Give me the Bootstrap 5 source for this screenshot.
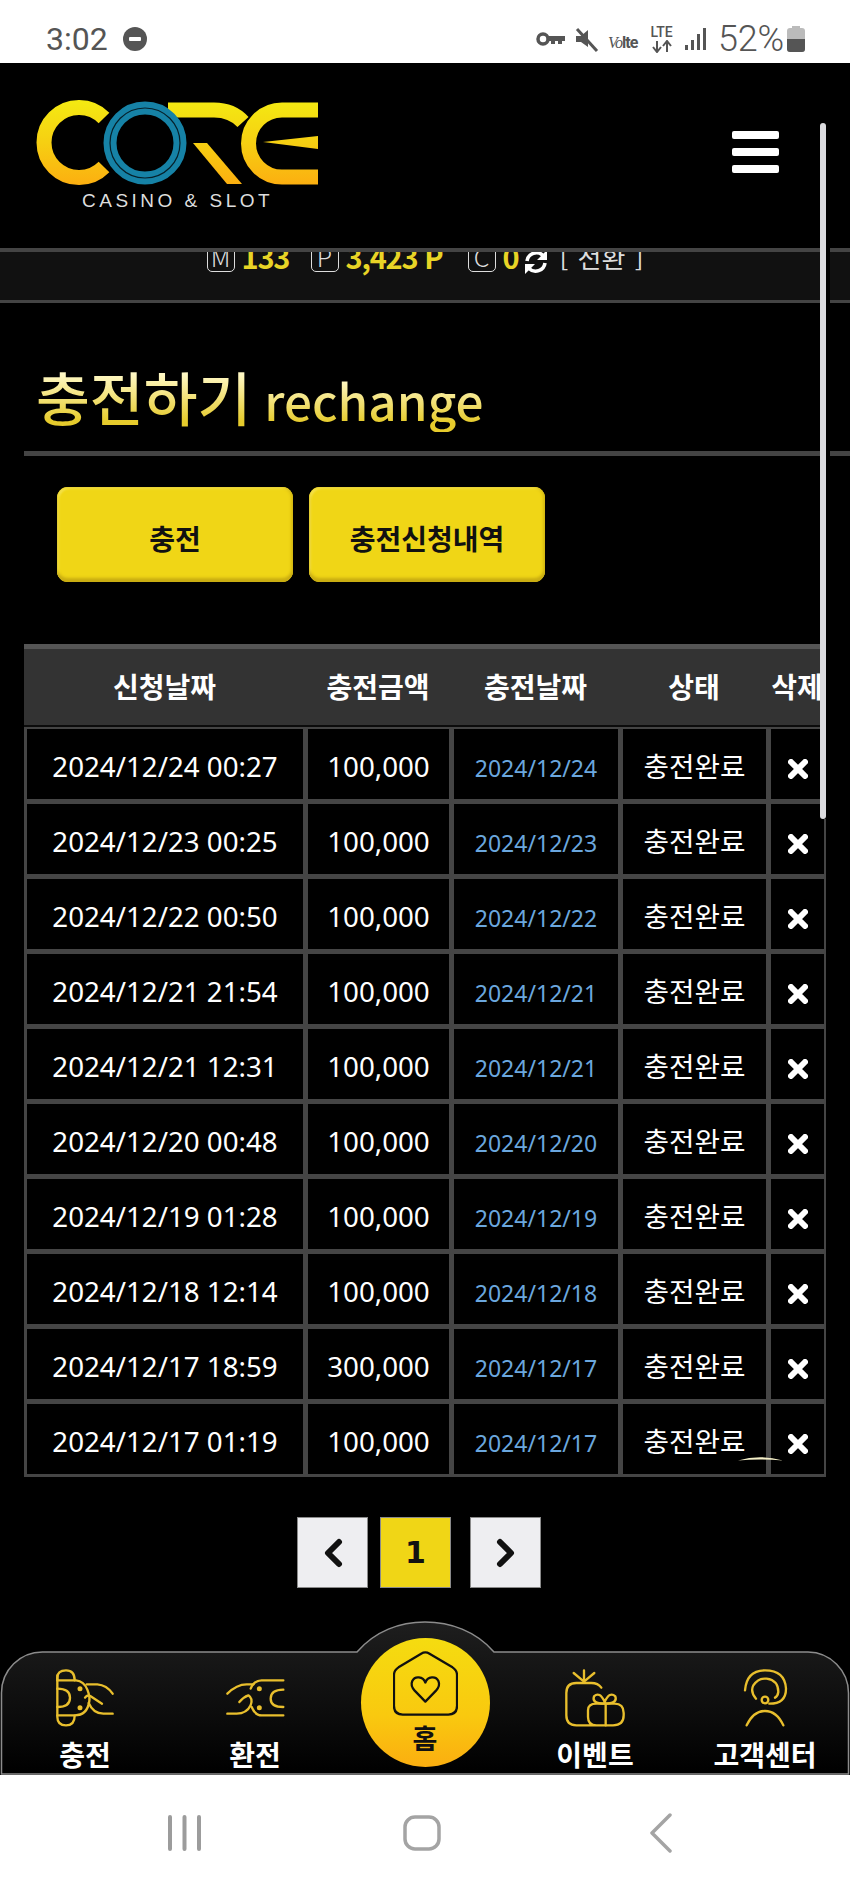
<!DOCTYPE html>
<html lang="ko">
<head>
  <meta charset="UTF-8" />
  <meta name="viewport" content="width=device-width, initial-scale=1" />
  <title>충전하기 - CORE</title>
  <link href="https://cdn.jsdelivr.net/npm/bootstrap@5.3.0/dist/css/bootstrap.min.css" rel="stylesheet" />
  <style>
    body { width: 850px; height: 1889px; margin: 0; overflow: hidden; background: #000; font-family: "Noto Sans CJK KR", "Noto Sans", sans-serif; }

    /* phone chrome */
    .phone-status { height: 63px; background: #fff; color: #555; font-family: Roboto, sans-serif; padding: 20px 45px 0 46px; }
    .phone-time { font-size: 32px; line-height: 38px; width: 77px; }
    .phone-pct { font-size: 36px; line-height: 38px; font-weight: 300; letter-spacing: -.2px; }
    .ic-dnd { margin-top: 7px; }
    .ic-key { margin-top: 10px; }
    .ic-mute { margin: 8px 0 0 8px; }
    .volte { font-size: 16px; font-weight: 700; width: 32px; letter-spacing: -1px; margin: 11px 0 0 8px; }
    .volte i { font-family: "Liberation Serif", serif; font-weight: 400; }
    .lte-stack { width: 27px; font-size: 14px; line-height: 13px; font-weight: 500; text-align: center; margin: 6px 0 0 8px; }
    .ic-signal { margin: 7px 11px 0 10px; }
    .ic-batt { margin: 6px 0 0 3px; }
    .phone-nav { height: 114px; background: #fff; padding: 40px 0 0 168px; }
    .nav-sq { margin-left: 202px; }
    .nav-back { margin: -2px 0 0 209px; }

    /* app */
    .app-screen { height: 1712px; position: relative; overflow: hidden; background: #000; }
    .site-head { height: 185px; padding: 37px 71px 0 35px; }
    .burger { width: 47px; margin-top: 31px; }
    .burger span { display: block; height: 8px; margin-bottom: 9px; background: #fff; border-radius: 2px; }
    .logo-sub { font-family: "Liberation Sans", sans-serif; font-size: 19px; letter-spacing: 3.5px; fill: #ddd; }

    .info-strip { height: 55px; background: #111; border-top: 4px solid #444; border-bottom: 3px solid #444; overflow: hidden; color: #ddd; }
    .info-line { margin-top: -8px; height: 32px; }
    .pt-box { width: 28px; height: 28px; border: 1.5px solid #ddd; border-radius: 5px; font-size: 25px; font-weight: 300; line-height: 22px; text-align: center; margin-right: 7px; flex: none; overflow: hidden; }
    .pt-num { font-size: 29px; line-height: 24px; font-weight: 700; color: #e8d426; white-space: nowrap; letter-spacing: -1.2px; }
    .w-m { width: 69px; }
    .w-p { width: 122px; }
    .w-c { width: 20px; }
    .ic-refresh { margin: 5px 11px 0 0; }
    .swap-text { font-size: 26px; line-height: 26px; white-space: nowrap; word-spacing: 2px; }

    .page-title { margin: 0 0 0 24px; padding: 0 0 19px 12px; height: 153px; border-bottom: 5px solid #444; display: flex; align-items: flex-end; }
    .page-title span { background: linear-gradient(#fff8c4 20%, #e6cb2c 85%); -webkit-background-clip: text; background-clip: text; color: transparent; }
    .title-ko { font-size: 58.5px; line-height: 72px; font-weight: 500; }
    .title-en { font-size: 49.5px; line-height: 64px; font-weight: 500; margin-left: 13px; }

    .tab-row { margin: 31px 0 62px 57px; gap: 16px; }
    .btn-gold { width: 236px; height: 95px; padding-top: 12px; background: #f0d616; color: #111; border: 0; border-radius: 11px; font-size: 28px; font-weight: 700; box-shadow: inset 0 -4px 3px #c9ad12, inset -2px 0 3px #d9bd14, inset 2px 2px 2px #f5e24a; }

    .hist-wrap { margin-left: 24px; width: 802px; }
    .table.hist-tbl { table-layout: fixed; width: 802px; border-collapse: separate; border-spacing: 0; margin: 0; color: #fff; --bs-table-bg: #000; --bs-table-color: #fff; font-size: 28px; }
    .table.hist-tbl col:nth-child(1) { width: 281px; }
    .table.hist-tbl col:nth-child(2) { width: 146px; }
    .table.hist-tbl col:nth-child(3) { width: 169px; }
    .table.hist-tbl col:nth-child(4) { width: 148px; }
    .table.hist-tbl col:nth-child(5) { width: 58px; }
    .table.hist-tbl > thead > tr > th { height: 83px; padding: 0 0 3px; background: #333; color: #fff; font-weight: 700; text-align: center; vertical-align: middle; border-width: 5px 0 2px; border-style: solid; border-color: #555 #333 #0c0c0c; white-space: nowrap; overflow: hidden; }
    .table.hist-tbl > tbody > tr > td { height: 75px; padding: 5px 0 0; background: #000; color: #fff; font-family: "Noto Sans", "Noto Sans CJK KR", sans-serif; font-size: 27.7px; text-align: center; vertical-align: middle; border-style: solid; border-color: #454545; border-width: 2px 2px 3px 3px; white-space: nowrap; }
    .date-done { color: #6ba7de; font-size: 23px; position: relative; top: 0; }
    .del-x { display: block; margin: 5px auto 0; }

    .pager { --bs-pagination-border-radius: 0; margin: 40px 0 0 297px; gap: 12px; }
    .pager .page-item .page-link { width: 71px; height: 71px; padding: 0; display: flex; align-items: center; justify-content: center; background: #eeeef1; border: 1px solid #8a8a8a; border-radius: 0; color: #111; margin: 0; }
    .pager .page-item.active .page-link { background: #f0d616; color: #111; font-family: "DejaVu Sans", sans-serif; font-weight: 700; font-size: 30px; }
    .pager .next-gap { margin-left: 7px; }

    .scroll-thumb { position: absolute; left: 820px; top: 60px; width: 10px; height: 696px; background: #000; }
    .scroll-thumb::before { content: ""; display: block; width: 6px; height: 100%; background: #dcdcdf; border-radius: 3px; }
    .glint { position: absolute; left: 738px; top: 1393px; }

    .tabbar { position: relative; height: 154px; margin-top: auto; padding-top: 46px; }
    .tabbar-bg { position: absolute; left: 0; top: 0; }
    .tab-item { position: relative; flex: 0 0 170px; width: 170px; text-align: center; color: #fff; font-size: 28px; font-weight: 700; line-height: 30px; }
    .tab-item svg { display: block; margin: 0 auto 10px; }
    .ico-line { fill: none; stroke: #e9bf2d; stroke-width: 7; stroke-linecap: round; stroke-linejoin: round; }
    .home-btn { width: 129px; height: 129px; margin: -29px auto 0; border-radius: 50%; background: linear-gradient(#f5dc10, #f9c90f 60%, #fbae10); color: #111; padding-top: 12px; line-height: 30px; font-size: 27px; }
    .tab-item .home-btn svg { margin-bottom: 6px; }
  </style>
</head>
<body>
  <svg width="0" height="0" class="position-absolute">
    <symbol id="xmark" viewBox="0 0 20 20"><path d="M3 3L17 17M17 3L3 17" stroke="#fff" stroke-width="6" stroke-linecap="round"/></symbol>
  </svg>

  <div class="phone-status d-flex align-items-start">
    <div class="phone-time">3:02</div>
    <svg class="ic-dnd" width="24" height="24" viewBox="0 0 24 24"><circle cx="12" cy="12" r="12" fill="#555"/><rect x="6" y="10" width="12" height="4" rx="1" fill="#fff"/></svg>
    <div class="ms-auto d-flex align-items-start">
      <svg class="ic-key" width="30" height="18" viewBox="0 0 30 18"><circle cx="7" cy="9" r="5" fill="none" stroke="#555" stroke-width="3.5"/><path d="M11 6H29V11H26V14H22V11H19V14H15V11H11Z" fill="#555"/></svg>
      <svg class="ic-mute" width="26" height="24" viewBox="0 0 26 24"><path d="M2 8H7L14 2V19L7 14H2Z" fill="#555"/><path d="M3 1L23 23" stroke="#555" stroke-width="3"/></svg>
      <div class="volte"><i>Vo</i>lte</div>
      <div class="lte-stack">LTE<br><svg width="26" height="13" viewBox="0 0 26 13"><path d="M8 1V11M4 7L8 12L12 7M18 12V2M14 6L18 1L22 6" fill="none" stroke="#555" stroke-width="2"/></svg></div>
      <svg class="ic-signal" width="22" height="24" viewBox="0 0 22 24"><rect x="0" y="18" width="3" height="5" fill="#555"/><rect x="6" y="13" width="3" height="10" fill="#555"/><rect x="12" y="7" width="3" height="16" fill="#555"/><rect x="18" y="1" width="3" height="22" fill="#555"/></svg>
      <div class="phone-pct">52%</div>
      <svg class="ic-batt" width="18" height="26" viewBox="0 0 18 26"><rect x="5" y="0" width="8" height="3" fill="#bbb"/><rect x="0" y="2" width="18" height="24" rx="3" fill="#bbb"/><path d="M0 13H18V23a3 3 0 0 1-3 3H3a3 3 0 0 1-3-3Z" fill="#555"/></svg>
    </div>
  </div>

  <div class="app-screen d-flex flex-column">
    <header class="site-head d-flex justify-content-between align-items-start flex-shrink-0">
      <svg width="285" height="110" viewBox="35 100 285 110" role="img" aria-label="CORE CASINO &amp; SLOT">
        <defs>
          <linearGradient id="logoGold" gradientUnits="userSpaceOnUse" x1="0" y1="100" x2="0" y2="186">
            <stop offset="0" stop-color="#f4ea12"/><stop offset=".5" stop-color="#f6cf12"/><stop offset="1" stop-color="#fcae10"/>
          </linearGradient>
        </defs>
        <g fill="none" stroke="url(#logoGold)" stroke-width="15">
          <path d="M104 118A35 35 0 1 0 104 167"/>
          <path d="M168 110H214Q232 110 243 122"/>
          <path d="M318 110H282A33 33 0 0 0 282 177H318"/>
        </g>
        <polygon points="193,143 207,143 242,184 227,184" fill="url(#logoGold)"/>
        <polygon points="263,142 318,136 318,149" fill="url(#logoGold)"/>
        <circle cx="145" cy="143" r="35" fill="none" stroke="#1682a6" stroke-width="13"/>
        <circle cx="145" cy="143" r="35" fill="none" stroke="#06202a" stroke-width="1.2"/>
        <text x="82" y="207" class="logo-sub">CASINO &amp; SLOT</text>
      </svg>
      <div class="burger"><span></span><span></span><span></span></div>
    </header>

    <div class="info-strip flex-shrink-0">
      <div class="info-line d-flex justify-content-center align-items-start">
        <div class="pt-box">M</div><div class="pt-num w-m">133</div>
        <div class="pt-box">P</div><div class="pt-num w-p">3,423 P</div>
        <div class="pt-box">C</div><div class="pt-num w-c">0</div>
        <svg class="ic-refresh" width="26" height="26" viewBox="0 0 26 26"><path d="M4 12A9.5 9.5 0 0 1 20 6.5M22 14A9.5 9.5 0 0 1 6 19.5" fill="none" stroke="#fff" stroke-width="3.6"/><path d="M24 1V11H14ZM2 25V15H12Z" fill="#fff"/></svg>
        <div class="swap-text">[ 전환 ]</div>
      </div>
    </div>

    <h2 class="page-title flex-shrink-0"><span class="title-ko">충전하기</span><span class="title-en">rechange</span></h2>

    <div class="tab-row d-flex flex-shrink-0">
      <button type="button" class="btn btn-gold">충전</button>
      <button type="button" class="btn btn-gold">충전신청내역</button>
    </div>

    <div class="hist-wrap flex-shrink-0">
      <table class="table hist-tbl">
        <colgroup><col><col><col><col><col></colgroup>
        <thead>
          <tr><th>신청날짜</th><th>충전금액</th><th>충전날짜</th><th>상태</th><th>삭제</th></tr>
        </thead>
        <tbody>
          <tr><td>2024/12/24 00:27</td><td>100,000</td><td><span class="date-done">2024/12/24</span></td><td>충전완료</td><td><svg class="del-x" width="20" height="20"><use href="#xmark"/></svg></td></tr>
          <tr><td>2024/12/23 00:25</td><td>100,000</td><td><span class="date-done">2024/12/23</span></td><td>충전완료</td><td><svg class="del-x" width="20" height="20"><use href="#xmark"/></svg></td></tr>
          <tr><td>2024/12/22 00:50</td><td>100,000</td><td><span class="date-done">2024/12/22</span></td><td>충전완료</td><td><svg class="del-x" width="20" height="20"><use href="#xmark"/></svg></td></tr>
          <tr><td>2024/12/21 21:54</td><td>100,000</td><td><span class="date-done">2024/12/21</span></td><td>충전완료</td><td><svg class="del-x" width="20" height="20"><use href="#xmark"/></svg></td></tr>
          <tr><td>2024/12/21 12:31</td><td>100,000</td><td><span class="date-done">2024/12/21</span></td><td>충전완료</td><td><svg class="del-x" width="20" height="20"><use href="#xmark"/></svg></td></tr>
          <tr><td>2024/12/20 00:48</td><td>100,000</td><td><span class="date-done">2024/12/20</span></td><td>충전완료</td><td><svg class="del-x" width="20" height="20"><use href="#xmark"/></svg></td></tr>
          <tr><td>2024/12/19 01:28</td><td>100,000</td><td><span class="date-done">2024/12/19</span></td><td>충전완료</td><td><svg class="del-x" width="20" height="20"><use href="#xmark"/></svg></td></tr>
          <tr><td>2024/12/18 12:14</td><td>100,000</td><td><span class="date-done">2024/12/18</span></td><td>충전완료</td><td><svg class="del-x" width="20" height="20"><use href="#xmark"/></svg></td></tr>
          <tr><td>2024/12/17 18:59</td><td>300,000</td><td><span class="date-done">2024/12/17</span></td><td>충전완료</td><td><svg class="del-x" width="20" height="20"><use href="#xmark"/></svg></td></tr>
          <tr><td>2024/12/17 01:19</td><td>100,000</td><td><span class="date-done">2024/12/17</span></td><td>충전완료</td><td><svg class="del-x" width="20" height="20"><use href="#xmark"/></svg></td></tr>
        </tbody>
      </table>
    </div>

    <ul class="pagination pager flex-shrink-0">
      <li class="page-item"><a class="page-link" href="#"><svg width="20" height="30" viewBox="0 0 20 30"><path d="M16 4L5 15L16 26" fill="none" stroke="#111" stroke-width="6" stroke-linecap="round" stroke-linejoin="round"/></svg></a></li>
      <li class="page-item active"><a class="page-link" href="#">1</a></li>
      <li class="page-item next-gap"><a class="page-link" href="#"><svg width="20" height="30" viewBox="0 0 20 30"><path d="M4 4L15 15L4 26" fill="none" stroke="#111" stroke-width="6" stroke-linecap="round" stroke-linejoin="round"/></svg></a></li>
    </ul>

    <nav class="tabbar d-flex flex-shrink-0">
      <svg class="tabbar-bg" width="850" height="154" viewBox="0 0 850 154">
        <defs><linearGradient id="barFill" x1="0" y1="0" x2="0" y2="1"><stop offset="0" stop-color="#1e1e1e"/><stop offset="1" stop-color="#000"/></linearGradient></defs>
        <path d="M1.5 153V72A41 41 0 0 1 43 31H357C375 10 400 1 425 1C450 1 476 10 494 31H808A41 41 0 0 1 848.5 72V153Z" fill="url(#barFill)" stroke="#8c8c8c" stroke-width="1.5"/>
      </svg>
      <a class="tab-item text-decoration-none">
        <svg width="64" height="62" viewBox="39 20 192 186" class="ico-line">
          <path d="M52 60V52Q52 30 78 30Q104 30 104 60"/>
          <path d="M52 45V170Q52 195 78 195Q104 195 104 166"/>
          <path d="M52 60H108Q132 62 142 88Q150 108 148 122Q142 165 104 165H52"/>
          <path d="M52 85Q90 85 90 112Q90 140 52 140"/>
          <path d="M140 72H172Q200 74 218 100"/>
          <path d="M135 112Q142 102 152 108L186 130"/>
          <path d="M146 128Q160 160 190 160H218"/>
          <circle cx="120" cy="85" r="4" fill="#e9bf2d"/><circle cx="120" cy="142" r="4" fill="#e9bf2d"/>
        </svg>
        충전
      </a>
      <a class="tab-item text-decoration-none">
        <svg width="64" height="62" viewBox="549 20 192 186" class="ico-line">
          <path d="M730 60H665Q642 60 632 85"/>
          <path d="M562 100Q590 72 620 72H640"/>
          <path d="M562 160H590Q620 160 632 135Q640 115 625 105Q610 110 598 125"/>
          <path d="M730 165H665Q645 165 635 140"/>
          <path d="M730 88Q692 88 692 115Q692 140 730 140"/>
          <circle cx="658" cy="85" r="4" fill="#e9bf2d"/><circle cx="658" cy="142" r="4" fill="#e9bf2d"/>
        </svg>
        환전
      </a>
      <a class="tab-item text-decoration-none">
        <div class="home-btn">
          <svg width="65" height="67" viewBox="125 74 201 204">
            <path d="M128 150Q128 135 142 126L212 84Q225 76 238 84L309 126Q323 135 323 150V245Q323 272 296 272H155Q128 272 128 245Z" fill="none" stroke="#111" stroke-width="7" stroke-linejoin="round"/>
            <path d="M225 232L192 198C172 176 188 155 205 157C215 158 222 164 225 173C228 164 235 158 245 157C262 155 278 176 258 198Z" fill="none" stroke="#111" stroke-width="7" stroke-linejoin="round"/>
          </svg>
          홈
        </div>
      </a>
      <a class="tab-item text-decoration-none">
        <svg width="64" height="62" viewBox="40 20 192 186" class="ico-line">
          <path d="M155 82Q145 68 125 68H80Q50 68 50 98V165Q50 195 80 195H190Q222 195 222 165V158Q222 130 195 130H140Q115 130 115 150V170Q115 195 140 195"/>
          <path d="M168 130V195"/>
          <path d="M165 130Q125 130 133 108Q150 92 165 125Q180 92 197 108Q205 130 165 130Z"/>
          <path d="M103 64V30M103 64L72 38M103 64L134 38"/>
        </svg>
        이벤트
      </a>
      <a class="tab-item text-decoration-none">
        <svg width="64" height="62" viewBox="549 20 192 186" class="ico-line">
          <path d="M585 90Q590 30 645 30Q705 30 708 85Q708 130 658 130"/>
          <path d="M618 115Q600 95 610 75Q625 52 650 55Q685 60 685 95Q683 108 675 112"/>
          <circle cx="645" cy="119" r="10"/>
          <path d="M590 195Q610 152 645 152Q680 152 700 195"/>
        </svg>
        고객센터
      </a>
    </nav>

    <div class="scroll-thumb"></div>
    <svg class="glint" width="45" height="5" viewBox="0 0 45 5"><path d="M0 4.5Q22 -2 45 4.5Q22 2.5 0 4.5Z" fill="#f5f0c8"/></svg>
  </div>

  <div class="phone-nav d-flex align-items-start">
    <svg width="33" height="36" viewBox="0 0 33 36"><path d="M2 2V34M16.5 2V34M31 2V34" stroke="#9c9c9c" stroke-width="4" stroke-linecap="round"/></svg>
    <svg class="nav-sq" width="38" height="36" viewBox="0 0 38 36"><rect x="2" y="2" width="34" height="32" rx="10" fill="none" stroke="#a4a4a4" stroke-width="3.5"/></svg>
    <svg class="nav-back" width="22" height="40" viewBox="0 0 22 40"><path d="M20 2L2 20L20 38" fill="none" stroke="#a4a4a4" stroke-width="3.5" stroke-linecap="round" stroke-linejoin="round"/></svg>
  </div>

  <script src="https://cdn.jsdelivr.net/npm/bootstrap@5.3.0/dist/js/bootstrap.bundle.min.js"></script>
</body>
</html>
